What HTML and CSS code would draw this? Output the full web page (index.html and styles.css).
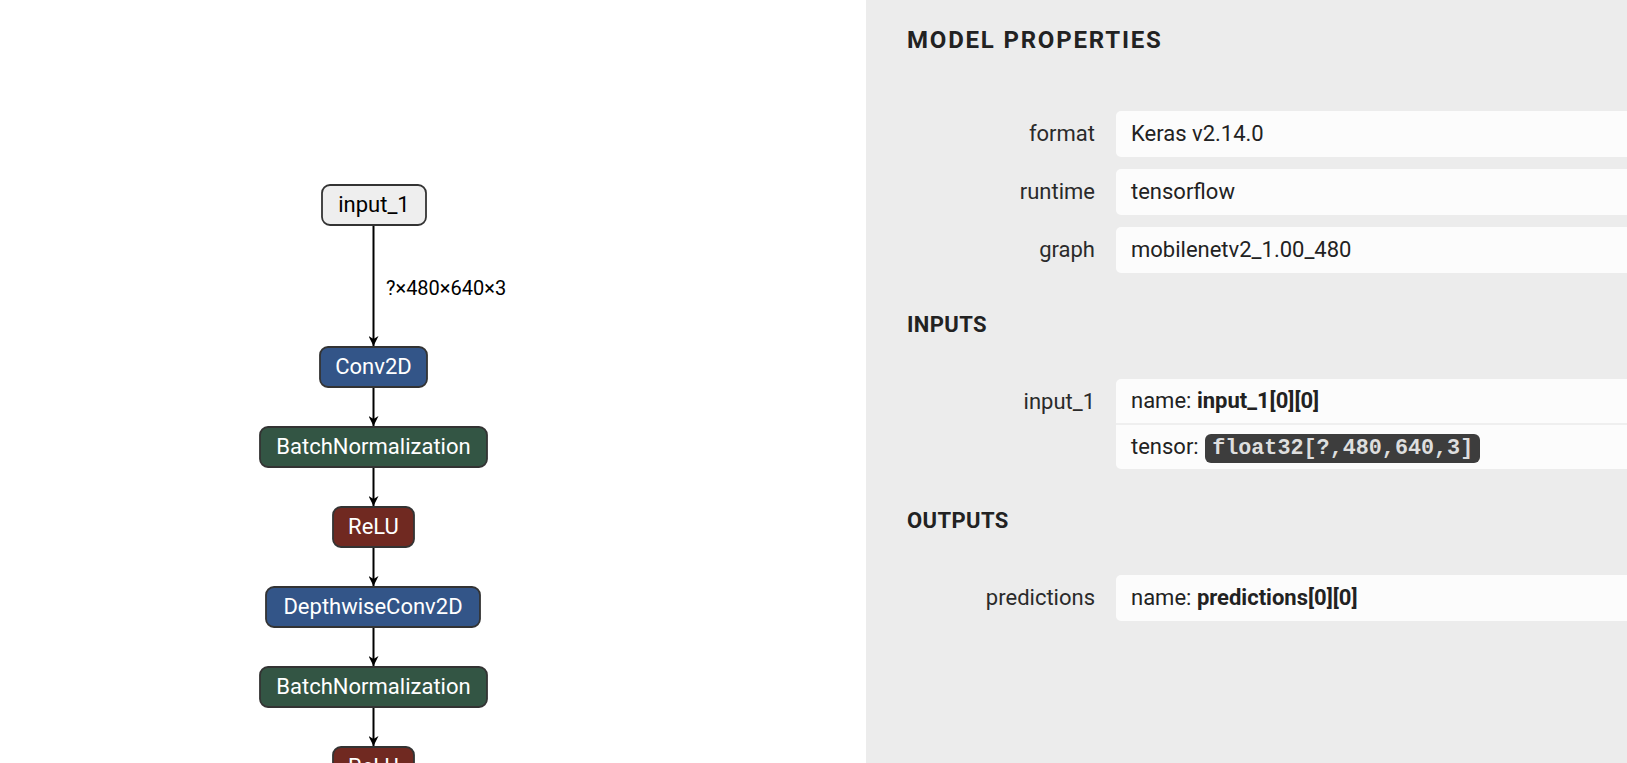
FILE: index.html
```html
<!DOCTYPE html>
<html>
<head>
<meta charset="utf-8">
<title>Model Properties</title>
<link rel="stylesheet" href="styles.css">
</head>
<body>
<div class="app">
  <div class="graph">
    <svg class="graph-svg" width="866" height="763" viewBox="0 0 866 763">
      <defs>
        <marker id="arrow" markerWidth="10" markerHeight="10" refX="10" refY="5" orient="auto" markerUnits="userSpaceOnUse">
          <path d="M 0 0 L 10 5 L 0 10 L 3 5 z" fill="#000"/>
        </marker>
      </defs>
      <g class="edges">
        <line x1="373.5" y1="225" x2="373.5" y2="346" marker-end="url(#arrow)"/>
        <line x1="373.5" y1="387" x2="373.5" y2="426" marker-end="url(#arrow)"/>
        <line x1="373.5" y1="467" x2="373.5" y2="506" marker-end="url(#arrow)"/>
        <line x1="373.5" y1="547" x2="373.5" y2="586" marker-end="url(#arrow)"/>
        <line x1="373.5" y1="627" x2="373.5" y2="666" marker-end="url(#arrow)"/>
        <line x1="373.5" y1="707" x2="373.5" y2="746" marker-end="url(#arrow)"/>
      </g>
      <text class="edge-label" x="386" y="295">?×480×640×3</text>
      <g class="node node-input">
        <rect x="322" y="185" width="104" height="40" rx="8"/>
        <text x="374" y="211.5">input_1</text>
      </g>
      <g class="node node-layer">
        <rect x="320" y="347" width="107" height="40" rx="8"/>
        <text x="373.5" y="373.5">Conv2D</text>
      </g>
      <g class="node node-norm">
        <rect x="260" y="427" width="227" height="40" rx="8"/>
        <text x="373.5" y="453.5">BatchNormalization</text>
      </g>
      <g class="node node-act">
        <rect x="333" y="507" width="81" height="40" rx="8"/>
        <text x="373.5" y="533.5">ReLU</text>
      </g>
      <g class="node node-layer">
        <rect x="266" y="587" width="214" height="40" rx="8"/>
        <text x="373" y="613.5">DepthwiseConv2D</text>
      </g>
      <g class="node node-norm">
        <rect x="260" y="667" width="227" height="40" rx="8"/>
        <text x="373.5" y="693.5">BatchNormalization</text>
      </g>
      <g class="node node-act">
        <rect x="333" y="747" width="81" height="40" rx="8"/>
        <text x="373.5" y="773.5">ReLU</text>
      </g>
    </svg>
  </div>
  <aside class="sidebar">
    <h1 class="title">MODEL PROPERTIES</h1>
    <div class="props">
      <div class="prop">
        <div class="prop-label">format</div>
        <div class="prop-value"><div class="value-row">Keras v2.14.0</div></div>
      </div>
      <div class="prop">
        <div class="prop-label">runtime</div>
        <div class="prop-value"><div class="value-row">tensorflow</div></div>
      </div>
      <div class="prop">
        <div class="prop-label">graph</div>
        <div class="prop-value"><div class="value-row">mobilenetv2_1.00_480</div></div>
      </div>
    </div>
    <h2 class="section-title">INPUTS</h2>
    <div class="props">
      <div class="prop">
        <div class="prop-label">input_1</div>
        <div class="prop-value">
          <div class="value-row value-row-sm">name: <b>input_1[0][0]</b></div>
          <div class="value-row value-row-sm value-row-split">tensor: <code class="badge">float32[?,480,640,3]</code></div>
        </div>
      </div>
    </div>
    <h2 class="section-title">OUTPUTS</h2>
    <div class="props">
      <div class="prop">
        <div class="prop-label">predictions</div>
        <div class="prop-value"><div class="value-row">name: <b>predictions[0][0]</b></div></div>
      </div>
    </div>
  </aside>
</div>
</body>
</html>
```

FILE: styles.css
```css
html, body {
  margin: 0;
  padding: 0;
  height: 100%;
  overflow: hidden;
  background: #ffffff;
}

body {
  font-family: Roboto, "Liberation Sans", sans-serif;
  color: #222222;
}

.app {
  display: flex;
  width: 1627px;
  height: 763px;
}

.graph {
  flex: 0 0 866px;
  background: #ffffff;
}

.graph-svg {
  display: block;
}

.edges line {
  stroke: #000000;
  stroke-width: 2;
}

.edge-label {
  font-family: Roboto, "Liberation Sans", sans-serif;
  font-size: 20px;
  fill: #000000;
}

.node rect {
  stroke: #333333;
  stroke-width: 1.8;
}

.node text {
  font-family: Roboto, "Liberation Sans", sans-serif;
  font-size: 22px;
  text-anchor: middle;
  fill: #ffffff;
}

.node-input rect { fill: #eeeeee; }
.node-input text { fill: #000000; }
.node-layer rect { fill: #335588; }
.node-norm rect { fill: #335544; }
.node-act rect { fill: #702921; }

.sidebar {
  flex: 1 1 auto;
  background: #ececec;
  padding: 25px 0 0 41px;
  overflow: hidden;
}

.title {
  margin: 0 0 56px 0;
  font-size: 24px;
  line-height: 30px;
  font-weight: 700;
  letter-spacing: 1.8px;
  color: #222222;
}

.section-title {
  margin: 37px 0 39px 0;
  font-size: 22px;
  line-height: 30px;
  font-weight: 700;
  letter-spacing: 0.4px;
  color: #222222;
}

.props {
  display: flex;
  flex-direction: column;
  gap: 12px;
}

.prop {
  display: grid;
  grid-template-columns: 188px 1fr;
  column-gap: 21px;
  font-size: 22px;
}

.prop-label {
  text-align: right;
  line-height: 46px;
  color: #2a2a2a;
}

.prop-value {
  background: #fcfcfc;
  border-radius: 5px 0 0 5px;
  width: 600px;
}

.value-row {
  padding-left: 15px;
  line-height: 46px;
  white-space: nowrap;
}

.value-row-sm {
  line-height: 44px;
}

.value-row-split {
  border-top: 2px solid #efefef;
}

.value-row b {
  font-weight: 700;
}

.badge {
  display: inline-block;
  font-family: "Liberation Mono", "DejaVu Sans Mono", monospace;
  font-weight: 700;
  font-size: 21.75px;
  line-height: 29px;
  padding: 0 7px;
  margin-left: 1px;
  background: #3d3d3d;
  color: #dedede;
  border-radius: 6px;
}
```
